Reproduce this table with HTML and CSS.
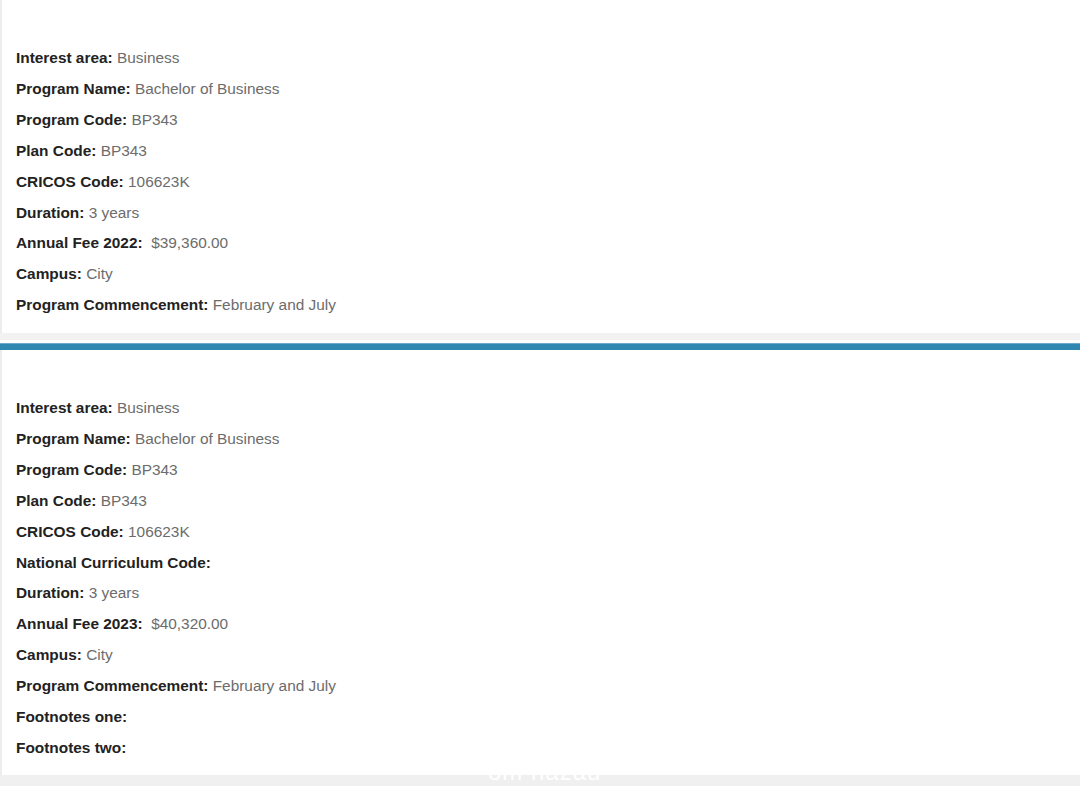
FILE: index.html
```html
<!DOCTYPE html>
<html lang="en">
<head>
<meta charset="utf-8">
<title>Program details</title>
<link rel="stylesheet" href="styles.css">
</head>
<body>
<div class="page">
  <section class="card card-first">
    <p class="row"><b>Interest area:</b> Business</p>
    <p class="row"><b>Program Name:</b> Bachelor of Business</p>
    <p class="row"><b>Program Code:</b> BP343</p>
    <p class="row"><b>Plan Code:</b> BP343</p>
    <p class="row"><b>CRICOS Code:</b> 106623K</p>
    <p class="row"><b>Duration:</b> 3 years</p>
    <p class="row"><b>Annual Fee 2022:</b>&nbsp; $39,360.00</p>
    <p class="row"><b>Campus:</b> City</p>
    <p class="row"><b>Program Commencement:</b> February and July</p>
  </section>
  <div class="gap"></div>
  <div class="divider"></div>
  <section class="card card-second">
    <p class="row"><b>Interest area:</b> Business</p>
    <p class="row"><b>Program Name:</b> Bachelor of Business</p>
    <p class="row"><b>Program Code:</b> BP343</p>
    <p class="row"><b>Plan Code:</b> BP343</p>
    <p class="row"><b>CRICOS Code:</b> 106623K</p>
    <p class="row"><b>National Curriculum Code:</b></p>
    <p class="row"><b>Duration:</b> 3 years</p>
    <p class="row"><b>Annual Fee 2023:</b>&nbsp; $40,320.00</p>
    <p class="row"><b>Campus:</b> City</p>
    <p class="row"><b>Program Commencement:</b> February and July</p>
    <p class="row"><b>Footnotes one:</b></p>
    <p class="row"><b>Footnotes two:</b></p>
  </section>
  <div class="bottom"></div>
  <span class="watermark">om nazau</span>
</div>
</body>
</html>
```
FILE: styles.css
```css
html, body {
  margin: 0;
  padding: 0;
  background: #ffffff;
}
body {
  font-family: "Liberation Sans", Arial, sans-serif;
  font-size: 15.4px;
  color: #6c6c6c;
}
.page {
  position: relative;
  width: 1080px;
  height: 786px;
  overflow: hidden;
  display: flex;
  flex-direction: column;
}
.card {
  background: #ffffff;
  border-left: 2px solid #ededed;
  padding: 0 14px;
}
.card-first {
  padding-top: 43.4px;
  height: 333px;
  box-sizing: border-box;
}
.card-second {
  padding-top: 43.4px;
  height: 425px;
  box-sizing: border-box;
}
.row {
  margin: 0;
  height: 30.85px;
  line-height: 30.85px;
  white-space: nowrap;
}
.row b {
  color: #222222;
  font-weight: bold;
}
.gap {
  height: 7px;
  background: #f2f2f2;
  border-bottom: 3px solid #ffffff;
}
.divider {
  height: 7px;
  background: #3088b1;
  border-top: 1px solid #6fa9c8;
  box-sizing: border-box;
}
.bottom {
  flex: 1;
  background: #f0f0f0;
}
.watermark {
  position: absolute;
  left: 488px;
  top: 759px;
  font-size: 24px;
  line-height: 26px;
  color: #ffffff;
  letter-spacing: 1px;
}
```
